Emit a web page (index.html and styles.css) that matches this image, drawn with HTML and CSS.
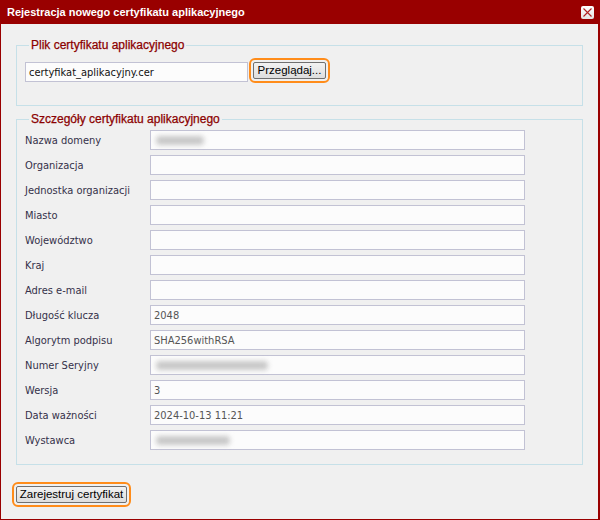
FILE: index.html
```html
<!DOCTYPE html>
<html lang="pl">
<head>
<meta charset="utf-8">
<title>Rejestracja nowego certyfikatu aplikacyjnego</title>
<link rel="stylesheet" href="styles.css">
</head>
<body>
<div class="dialog">
  <div class="titlebar">
    <span class="title">Rejestracja nowego certyfikatu aplikacyjnego</span>
    <span class="close" aria-label="Zamknij">
      <svg width="9" height="9" viewBox="0 0 9 9"><path d="M0.5 0.5L8.5 8.5M8.5 0.5L0.5 8.5" stroke="#b22222" stroke-width="1.1" fill="none"/></svg>
    </span>
  </div>
  <div class="content">
    <fieldset class="group group-file">
      <legend>Plik certyfikatu aplikacyjnego</legend>
      <div class="file-row">
        <div class="field file-field">certyfikat_aplikacyjny.cer</div>
        <button class="btn focused">Przeglądaj...</button>
      </div>
    </fieldset>
    <fieldset class="group group-details">
      <legend>Szczegóły certyfikatu aplikacyjnego</legend>
      <div class="rows">
        <div class="row"><span class="label">Nazwa domeny</span><div class="field"><span class="blur" style="width:48px"></span></div></div>
        <div class="row"><span class="label">Organizacja</span><div class="field"></div></div>
        <div class="row"><span class="label">Jednostka organizacji</span><div class="field"></div></div>
        <div class="row"><span class="label">Miasto</span><div class="field"></div></div>
        <div class="row"><span class="label">Województwo</span><div class="field"></div></div>
        <div class="row"><span class="label">Kraj</span><div class="field"></div></div>
        <div class="row"><span class="label">Adres e-mail</span><div class="field"></div></div>
        <div class="row"><span class="label">Długość klucza</span><div class="field">2048</div></div>
        <div class="row"><span class="label">Algorytm podpisu</span><div class="field">SHA256withRSA</div></div>
        <div class="row"><span class="label">Numer Seryjny</span><div class="field"><span class="blur" style="width:112px"></span></div></div>
        <div class="row"><span class="label">Wersja</span><div class="field">3</div></div>
        <div class="row"><span class="label">Data ważności</span><div class="field">2024-10-13 11:21</div></div>
        <div class="row"><span class="label">Wystawca</span><div class="field"><span class="blur" style="width:74px"></span></div></div>
      </div>
    </fieldset>
    <div class="actions">
      <button class="btn focused">Zarejestruj certyfikat</button>
    </div>
  </div>
</div>
</body>
</html>
```

FILE: styles.css
```css
* { box-sizing: border-box; }
html, body { margin: 0; padding: 0; background: #f0f0f0; }
body { font-family: "DejaVu Sans Condensed", "DejaVu Sans", sans-serif; font-size: 11px; }

.dialog {
  width: 600px;
  height: 520px;
  border: 1px solid #990000;
  border-top: none;
  border-right-width: 2px;
  background: #f0f0f0;
  display: flex;
  flex-direction: column;
}

.titlebar {
  height: 24px;
  background: #990000;
  margin: 0 -2px 0 -1px;
  display: flex;
  align-items: center;
  justify-content: space-between;
  padding: 0 6px 0 7px;
}
.title {
  color: #fff;
  font-family: "Liberation Sans", Arial, sans-serif;
  font-weight: bold;
  font-size: 11px;
  margin-top: -1px;
}
.close {
  width: 13px;
  height: 13px;
  border-radius: 2px;
  background: linear-gradient(#ffffff, #e4e4e4);
  display: flex;
  align-items: center;
  justify-content: center;
  margin-top: 1px;
}

.content {
  padding: 14px 15px 0 15px;
  display: flex;
  flex-direction: column;
}

.group {
  margin: 0;
  border: 1px solid #c6e0e8;
  padding: 0 8px;
}
.group legend {
  color: #8b0000;
  font-family: "Liberation Sans", Arial, sans-serif;
  font-size: 12px;
  line-height: 14px;
  padding: 0 2px;
  margin-left: 4px;
  -webkit-text-stroke: 0.25px #8b0000;
}

.group-file { padding-top: 10px; padding-bottom: 23px; }
.group-details { margin-top: 6px; padding-top: 4px; padding-bottom: 14px; }

.file-row { display: flex; align-items: flex-start; gap: 5px; }

.field {
  height: 20px;
  border: 1px solid #c2c2d4;
  background: #fcfcfc;
  color: #555;
  padding: 0 3px;
  display: flex;
  align-items: center;
  white-space: nowrap;
}
.file-field { width: 223px; color: #111; }

.btn {
  font-family: "Liberation Sans", Arial, sans-serif;
  font-size: 11.5px;
  color: #000;
  background: linear-gradient(#f2f2f2, #dedede);
  border: 1px solid #707070;
  border-radius: 2px;
  height: 17px;
  padding: 0;
  line-height: 15px;
  white-space: nowrap;
}
.btn.focused {
  outline: 2px solid #ff8c1a;
  outline-offset: 2px;
}
.file-row .btn { width: 73px; }

.rows { display: flex; flex-direction: column; gap: 5px; }
.row { display: flex; align-items: center; }
.label { width: 125px; color: #35304a; }
.row .field { width: 375px; }

.blur {
  display: inline-block;
  height: 9px;
  background: #c8c8c8;
  border-radius: 4px;
  filter: blur(2.5px);
  margin-left: 2px;
}

.actions { padding-top: 21px; display: flex; }
.actions .btn { width: 111px; }
```
